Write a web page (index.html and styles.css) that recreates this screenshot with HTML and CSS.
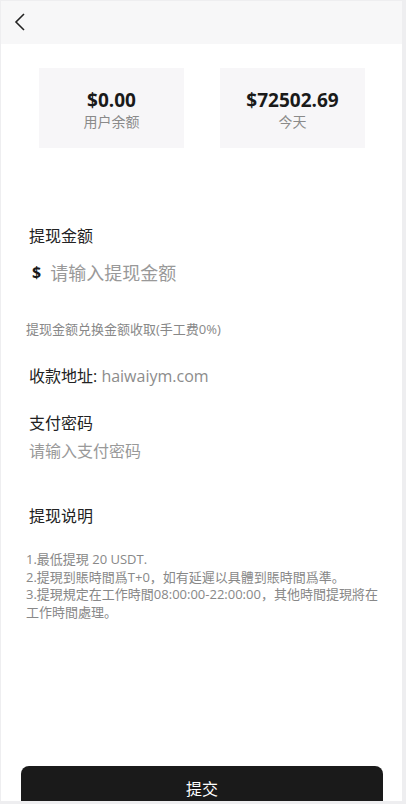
FILE: index.html
```html
<!DOCTYPE html>
<html lang="zh">
<head>
<meta charset="utf-8">
<title>提现</title>
<link rel="stylesheet" href="styles.css">
</head>
<body>
<div class="page">
  <header class="header">
    <svg class="back" width="14" height="20" viewBox="0 0 14 20"><path d="M11 2 L3 10 L11 18" fill="none" stroke="#222" stroke-width="1.6"/></svg>
  </header>
  <div class="cards">
    <div class="card"><div class="amount">$0.00</div><div class="label">用户余额</div></div>
    <div class="card"><div class="amount">$72502.69</div><div class="label">今天</div></div>
  </div>
  <div class="section">
    <div class="title t1">提现金额</div>
    <div class="input-row"><span class="dollar">$</span><span class="ph-big">请输入提现金额</span></div>
    <div class="hint">提现金额兑换金额收取(手工费0%)</div>
    <div class="addr">收款地址: <span class="addr-val">haiwaiym.com</span></div>
    <div class="title t2">支付密码</div>
    <div class="ph">请输入支付密码</div>
    <div class="title t3">提现说明</div>
    <div class="notes">
      <div>1.最低提現 20 USDT.</div>
      <div>2.提現到賬時間爲T+0，如有延遲以具體到賬時間爲準。</div>
      <div>3.提現規定在工作時間08:00:00-22:00:00，其他時間提現將在工作時間處理。</div>
    </div>
  </div>
  <button class="submit">提交</button>
</div>
</body>
</html>
```

FILE: styles.css
```css
html, body {
  margin: 0;
  padding: 0;
  background: #eeeef0;
}
body {
  font-family: "Open Sans", "Noto Sans CJK SC", sans-serif;
  color: #222;
}
.page {
  width: 401px;
  height: 800px;
  margin: 1px 0 0 1px;
  background: #fff;
  display: flex;
  flex-direction: column;
  overflow: hidden;
}
.header {
  height: 43px;
  flex: none;
  background: #f7f7f8;
  display: flex;
  align-items: center;
  padding-left: 12px;
}
.back {
  display: block;
  margin-top: -1px;
}
.cards {
  display: flex;
  justify-content: center;
  gap: 36px;
  padding-top: 24px;
  padding-left: 1px;
}
.card {
  width: 145px;
  height: 80px;
  background: #f7f6f8;
  display: flex;
  flex-direction: column;
  align-items: center;
  justify-content: center;
}
.amount {
  font-size: 19px;
  font-weight: 700;
  line-height: 24px;
  color: #1a1a1a;
  margin-top: 2px;
}
.label {
  font-size: 14px;
  line-height: 19px;
  color: #8a8a8a;
}
.section {
  padding-left: 28px;
}
.title {
  font-size: 16px;
  line-height: 22px;
  color: #222;
}
.t1 { margin-top: 77px; }
.input-row {
  margin-top: 12px;
  display: flex;
  align-items: center;
  height: 26px;
}
.dollar {
  font-weight: 700;
  font-size: 16px;
  margin-left: 3px;
  margin-right: 9px;
  color: #1a1a1a;
}
.ph-big {
  font-size: 18px;
  color: #999;
}
.hint {
  margin-top: 35px;
  margin-left: -3px;
  font-size: 13px;
  line-height: 18px;
  color: #888;
}
.addr {
  margin-top: 27px;
  font-size: 16px;
  line-height: 22px;
  color: #222;
}
.addr-val { color: #8c8c8c; }
.t2 { margin-top: 25px; }
.ph {
  margin-top: 6px;
  font-size: 16px;
  line-height: 22px;
  color: #999;
}
.t3 { margin-top: 43px; }
.notes {
  margin-top: 24px;
  margin-left: -3px;
  width: 356px;
  font-size: 13px;
  line-height: 17.5px;
  color: #888;
}
.submit {
  margin: auto 19px 0 20px;
  height: 44px;
  flex: none;
  border: none;
  border-radius: 8px;
  background: #1a1a1a;
  color: #fff;
  font-family: "Noto Sans CJK SC", sans-serif;
  font-size: 16px;
  transform: translateY(9px);
}
```
